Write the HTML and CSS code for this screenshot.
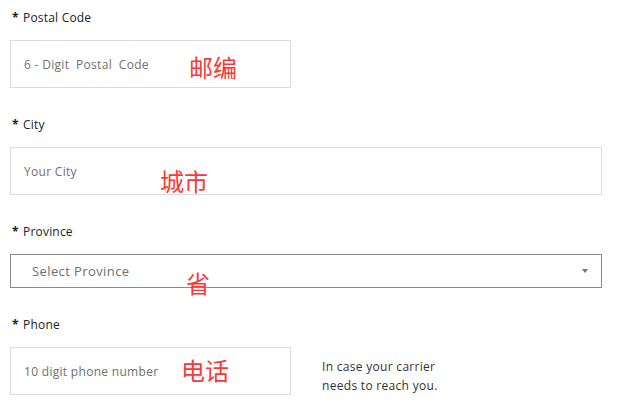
FILE: index.html
```html
<!DOCTYPE html>
<html lang="en">
<head>
<meta charset="utf-8">
<title>Address form</title>
<link rel="stylesheet" href="styles.css">
</head>
<body>
<form class="form">
  <div class="field">
    <div class="label"><span class="req">*</span>Postal Code</div>
    <div class="box box-half">
      <span class="ph">6 - Digit&nbsp; Postal&nbsp; Code</span>
      <span class="note note-postal">邮编</span>
    </div>
  </div>
  <div class="field">
    <div class="label"><span class="req">*</span>City</div>
    <div class="box box-full">
      <span class="ph">Your City</span>
      <span class="note note-city">城市</span>
    </div>
  </div>
  <div class="field">
    <div class="label"><span class="req">*</span>Province</div>
    <div class="select">
      <span class="ph ph-select">Select Province</span>
      <span class="arrow"></span>
      <span class="note note-prov">省</span>
    </div>
  </div>
  <div class="field">
    <div class="label"><span class="req">*</span>Phone</div>
    <div class="row">
      <div class="box box-half">
        <span class="ph">10 digit phone number</span>
        <span class="note note-phone">电话</span>
      </div>
      <p class="hint">In case your carrier<br>needs to reach you.</p>
    </div>
  </div>
</form>
</body>
</html>
```
FILE: styles.css
```css
* { box-sizing: border-box; }
html, body { margin: 0; padding: 0; background: #fff; }
body {
  font-family: "Open Sans", "Noto Sans", sans-serif;
  color: #222;
}
.form {
  padding: 9px 24px 0 10px;
}
.field {
  margin-bottom: 28px;
}
.label {
  font-size: 12px;
  line-height: 16px;
  padding-top: 1px;
  margin-bottom: 14px;
  padding-left: 2px;
  color: #222;
  letter-spacing: 0.2px;
}
.req {
  display: inline-block;
  width: 11px;
  font-weight: 700;
}
.box {
  position: relative;
  height: 48px;
  border: 1px solid #dcdcdc;
  display: flex;
  align-items: center;
  padding-left: 13px;
}
.box-half { width: 281px; flex: none; }
.box-full { width: 592px; }
.ph {
  font-size: 12px;
  color: #707070;
  white-space: nowrap;
  letter-spacing: 0.3px;
}
.select {
  position: relative;
  width: 592px;
  height: 34px;
  border: 1px solid #8a8a8a;
  display: flex;
  align-items: center;
  justify-content: space-between;
  padding: 0 13px 0 21px;
}
.ph-select { font-size: 13px; letter-spacing: 0.4px; }
.arrow {
  width: 0;
  height: 0;
  border-left: 3.5px solid transparent;
  border-right: 3.5px solid transparent;
  border-top: 4px solid #777;
}
.row {
  display: flex;
  align-items: flex-start;
}
.hint {
  margin: 10px 0 0 31px;
  font-size: 12px;
  line-height: 19px;
  color: #333;
  letter-spacing: 0.3px;
}
.note {
  position: absolute;
  font-family: "Noto Sans CJK SC", sans-serif;
  font-size: 24px;
  line-height: 24px;
  color: #f53a3a;
  white-space: nowrap;
}
.note-postal { left: 178px; top: 14px; }
.note-city { left: 149px; top: 21px; }
.note-prov { left: 175px; top: 16px; }
.note-phone { left: 170px; top: 10px; }
```
